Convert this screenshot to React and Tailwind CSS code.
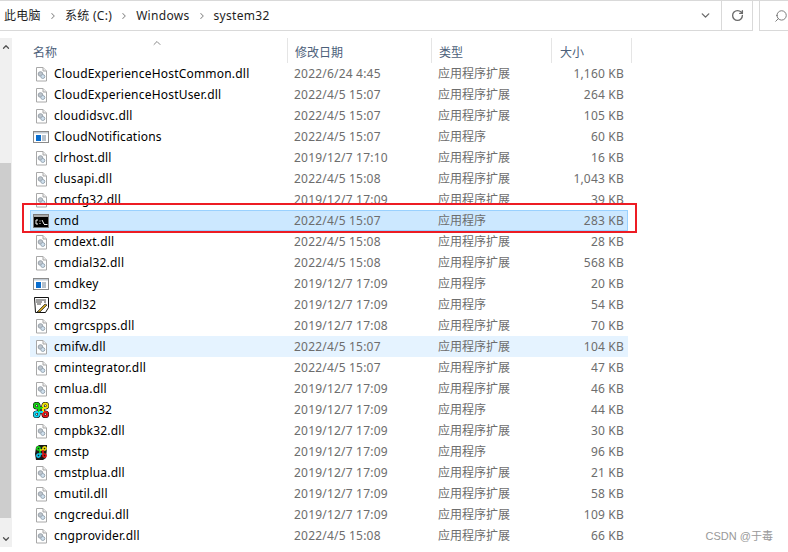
import { ChevronRight, ChevronDown, ChevronUp, RotateCw, Search } from 'lucide-react';

const rows = [
  ['CloudExperienceHostCommon.dll', '2022/6/24 4:45', '应用程序扩展', '1,160 KB', 'dll'],
  ['CloudExperienceHostUser.dll', '2022/4/5 15:07', '应用程序扩展', '264 KB', 'dll'],
  ['cloudidsvc.dll', '2022/4/5 15:07', '应用程序扩展', '105 KB', 'dll'],
  ['CloudNotifications', '2022/4/5 15:07', '应用程序', '60 KB', 'app'],
  ['clrhost.dll', '2019/12/7 17:10', '应用程序扩展', '16 KB', 'dll'],
  ['clusapi.dll', '2022/4/5 15:08', '应用程序扩展', '1,043 KB', 'dll'],
  ['cmcfg32.dll', '2019/12/7 17:09', '应用程序扩展', '39 KB', 'dll'],
  ['cmd', '2022/4/5 15:07', '应用程序', '283 KB', 'cmd', 'selected'],
  ['cmdext.dll', '2022/4/5 15:08', '应用程序扩展', '28 KB', 'dll'],
  ['cmdial32.dll', '2022/4/5 15:08', '应用程序扩展', '568 KB', 'dll'],
  ['cmdkey', '2019/12/7 17:09', '应用程序', '20 KB', 'app'],
  ['cmdl32', '2019/12/7 17:09', '应用程序', '54 KB', 'cmdl'],
  ['cmgrcspps.dll', '2019/12/7 17:08', '应用程序扩展', '70 KB', 'dll'],
  ['cmifw.dll', '2022/4/5 15:07', '应用程序扩展', '104 KB', 'dll', 'hover'],
  ['cmintegrator.dll', '2022/4/5 15:07', '应用程序扩展', '47 KB', 'dll'],
  ['cmlua.dll', '2019/12/7 17:09', '应用程序扩展', '46 KB', 'dll'],
  ['cmmon32', '2019/12/7 17:09', '应用程序', '44 KB', 'mon'],
  ['cmpbk32.dll', '2019/12/7 17:09', '应用程序扩展', '30 KB', 'dll'],
  ['cmstp', '2019/12/7 17:09', '应用程序', '96 KB', 'stp'],
  ['cmstplua.dll', '2019/12/7 17:09', '应用程序扩展', '21 KB', 'dll'],
  ['cmutil.dll', '2019/12/7 17:09', '应用程序扩展', '58 KB', 'dll'],
  ['cngcredui.dll', '2019/12/7 17:09', '应用程序扩展', '109 KB', 'dll'],
  ['cngprovider.dll', '2022/4/5 15:08', '应用程序扩展', '66 KB', 'dll'],
];

function FileIcon({ kind }) {
  if (kind === 'dll') {
    return (
      <svg width="16" height="16" viewBox="0 0 16 16">
        <path d="M3.5 1.5h6.5l3.5 3.500v10h-10z" fill="#fff" stroke="#a8a8a8" />
        <path d="M10 1.500v3.500h3.500" fill="#ececec" stroke="#a8a8a8" />
        <circle cx="7.500" cy="8" r="2.300" fill="#bcc4cc" stroke="#9aa2aa" />
        <circle cx="9.800" cy="10.500" r="2" fill="#cfe0ee" stroke="#9aa8b4" />
      </svg>
    );
  }
  if (kind === 'app') {
    return (
      <svg width="16" height="16" viewBox="0 0 16 16">
        <rect x=".5" y="2.500" width="15" height="11" fill="#fff" stroke="#8a8a8a" />
        <rect x="1" y="3" width="14" height="1.500" fill="#c4ccd4" />
        <rect x="3" y="6" width="5" height="6" fill="#0a6ecf" />
        <path d="M9 7h4M9 9h4M9 11h4" stroke="#6f8296" />
      </svg>
    );
  }
  if (kind === 'cmd') {
    return (
      <svg width="16" height="16" viewBox="0 0 16 16">
        <rect x=".5" y="1.500" width="15" height="13" fill="#000" stroke="#7b7b7b" />
        <rect x="1" y="2" width="14" height="2" fill="#a8a8a8" />
        <path d="M5 7H3v4h2M7 7.500v1M7 10v1M9 7l2 4M11 11.500h3.500" stroke="#f4f4f4" fill="none" />
      </svg>
    );
  }
  if (kind === 'cmdl') {
    return (
      <svg width="16" height="16" viewBox="0 0 16 16">
        <path d="M1.500 .5h14v10l-3 5h-10z" fill="#fff" stroke="#111" />
        <path d="M3 3h10M3 5h6M11 5h2M4 7h4" stroke="#444" />
        <path d="M4 15l8-8 2 1-7 7z" fill="#c9a227" stroke="#222" strokeWidth=".7" />
      </svg>
    );
  }
  if (kind === 'mon') {
    return (
      <svg width="16" height="16" viewBox="0 0 16 16" fill="none" strokeWidth="2">
        <path d="M6 6H3.500a2.300 2.300 0 1 1 2.500-2.500V10" stroke="#111" strokeWidth="3.200" />
        <path d="M10 6V3.500A2.300 2.300 0 1 1 12.500 6H6" stroke="#111" strokeWidth="3.200" />
        <path d="M6 10v2.500A2.300 2.300 0 1 1 3.500 10H10" stroke="#111" strokeWidth="3.200" />
        <path d="M10 10h2.500a2.300 2.300 0 1 1-2.500 2.500V6" stroke="#111" strokeWidth="3.200" />
        <path d="M6 6H3.500a2.300 2.300 0 1 1 2.500-2.500V6" stroke="#14d414" />
        <path d="M10 6V3.500A2.300 2.300 0 1 1 12.500 6H10" stroke="#f2e20c" />
        <path d="M6 10v2.500A2.300 2.300 0 1 1 3.500 10H6" stroke="#12d4f0" />
        <path d="M10 10h2.500a2.300 2.300 0 1 1-2.500 2.500V10" stroke="#e81818" />
        <path d="M6 6h4M6 6v4" stroke="#14d414" />
        <path d="M10 6v4" stroke="#f2e20c" />
        <path d="M6 10h4" stroke="#12d4f0" />
      </svg>
    );
  }
  return (
    <svg width="16" height="16" viewBox="0 0 16 16" fill="none" strokeWidth="1.600">
      <path d="M3 3l3-2h8v3l-1 10-3 2H3l-1-6z" fill="#1a1a1a" />
      <path d="M7 6H5a1.600 1.600 0 1 1 2-2v6" stroke="#18d818" />
      <path d="M10 6V4a1.600 1.600 0 1 1 2 2H7" stroke="#efe010" />
      <path d="M7 10v2a1.600 1.600 0 1 1-2-2h5" stroke="#12c8f0" />
      <path d="M10 10h2a1.600 1.600 0 1 1-2 2V6" stroke="#e01818" />
    </svg>
  );
}

function Row({ name, date, type, size, icon, state }) {
  const bg =
    state === 'selected'
      ? 'bg-[#cce8ff] border-[#99d1ff]'
      : state === 'hover'
        ? 'bg-[#e5f3ff] border-[#e5f3ff]'
        : 'border-transparent';
  return (
    <div className={`flex items-center h-[21px] border ${bg}`}>
      <div className="w-[257px] shrink-0 flex items-center gap-[5px] pl-[2px]">
        <FileIcon kind={icon} />
        <span className="text-[#000] whitespace-nowrap tracking-[0.2px]">{name}</span>
      </div>
      <div className="w-[144px] shrink-0 pl-[6px] text-[#6d6d6d] tracking-[0.2px]">{date}</div>
      <div className="w-[120px] shrink-0 pl-[6px] text-[#6d6d6d]">{type}</div>
      <div className="w-[72px] shrink-0 text-right text-[#6d6d6d] whitespace-nowrap tracking-[0.2px]">{size}</div>
    </div>
  );
}

function Crumb({ children }) {
  return <span className="text-[#1e1e1e] whitespace-nowrap tracking-[0.3px]">{children}</span>;
}

function Sep() {
  return <ChevronRight size={10} strokeWidth={2.5} className="text-[#8a8a8a]" />;
}

export default function App() {
  return (
    <div className="relative w-[788px] h-[552px] overflow-hidden bg-white text-[12px] leading-[21px] font-['Noto_Sans','Noto_Sans_CJK_SC',sans-serif]">
      {/* Address bar */}
      <div className="flex items-stretch h-[31px] border-t border-[#d9d9d9]">
        <div className="flex items-center w-[753px] shrink-0 border-r border-b border-[#d9d9d9]">
          <div className="flex-1 flex items-center gap-[7px] pl-[4px]">
            <Crumb>此电脑</Crumb>
            <Sep />
            <Crumb>系统 (C:)</Crumb>
            <Sep />
            <Crumb>Windows</Crumb>
            <Sep />
            <Crumb>system32</Crumb>
          </div>
          <div className="w-[31px] flex justify-center">
            <ChevronDown size={13} strokeWidth={2.5} className="text-[#6a6a6a]" />
          </div>
          <div className="w-[31px] h-full flex items-center justify-center border-l border-[#d9d9d9]">
            <RotateCw size={13} strokeWidth={2.5} className="text-[#6a6a6a]" />
          </div>
        </div>
        <div className="w-[12px] border-b border-white" />
        <div className="flex-1 flex items-center pl-[14px] border-l border-b border-[#d9d9d9]">
          <Search size={14} strokeWidth={1.5} className="shrink-0 text-[#6a6a6a] -scale-x-100" />
        </div>
      </div>

      <div className="flex h-[516px] mt-[7px]">
        {/* Scrollbar */}
        <div className="w-[12px] h-[509px] flex flex-col bg-[#f0f0f0]">
          <div className="h-[17px] flex items-center justify-center">
            <ChevronUp size={10} strokeWidth={3} className="text-[#505050]" />
          </div>
          <div className="mt-[108px] w-[11px] h-[355px] bg-[#cdcdcd]" />
          <div className="mt-auto h-[17px] flex items-center justify-center">
            <ChevronDown size={10} strokeWidth={3} className="text-[#505050]" />
          </div>
        </div>

        {/* File list */}
        <div className="ml-[18px] w-[598px]">
          <div className="relative flex w-[602px] h-[25px] text-[#4c607a]">
            <ChevronUp size={12} className="absolute left-[121px] -top-[1px] text-[#8a8a8a]" />
            <div className="w-[258px] pl-[3px] pt-[4px] border-r border-[#e5e5e5]">名称</div>
            <div className="w-[144px] pl-[7px] pt-[4px] border-r border-[#e5e5e5]">修改日期</div>
            <div className="w-[120px] pl-[7px] pt-[4px] border-r border-[#e5e5e5]">类型</div>
            <div className="w-[80px] pl-[8px] pt-[4px] border-r border-[#e5e5e5]">大小</div>
          </div>
          {rows.map(([name, date, type, size, icon, state]) => (
            <Row key={name} name={name} date={date} type={type} size={size} icon={icon} state={state} />
          ))}
        </div>
      </div>

      {/* Red annotation box */}
      <div className="absolute left-[22px] top-[203px] w-[615px] h-[30px] border-2 border-[#ed1c24]" />

      {/* Watermark */}
      <div className="absolute right-[15px] top-[526px] text-[11px] text-[#999999] font-['Liberation_Sans','Noto_Sans_CJK_SC',sans-serif]">CSDN @于毒</div>
    </div>
  );
}
